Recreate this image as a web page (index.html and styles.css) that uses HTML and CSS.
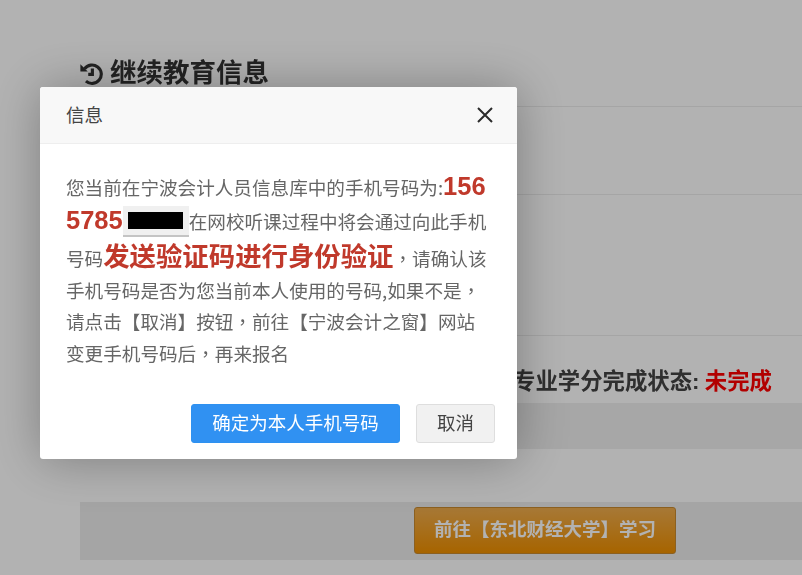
FILE: index.html
```html
<!DOCTYPE html>
<html lang="zh-CN">
<head>
<meta charset="utf-8">
<title>继续教育信息</title>
<link rel="stylesheet" href="styles.css">
</head>
<body>
<main class="page">
  <header class="heading">
    <h1 class="title">
      <svg class="title-icon" viewBox="0 0 26 26" aria-hidden="true">
        <path class="icon-stroke" d="M6 8.5A10 10 0 1 1 7.5 21.8"/>
        <path class="icon-fill" d="M1.5 3.5 9.5 11.5H1.5Z"/>
        <path class="icon-hand" d="M14.5 8V14.5H10"/>
      </svg>
      <span>继续教育信息</span>
    </h1>
  </header>
  <section class="row row-one"></section>
  <section class="row row-two"></section>
  <section class="status">专业学分完成状态: <em class="status-value">未完成</em></section>
  <div class="band band-one"></div>
  <div class="band band-two">
    <a class="study-btn">前往【东北财经大学】学习</a>
  </div>
</main>
<div class="overlay">
  <div class="dialog">
    <div class="dialog-head">
      <span class="dialog-title">信息</span>
      <svg class="close" viewBox="0 0 16 16" aria-hidden="true"><path d="M1 1 15 15M15 1 1 15"/></svg>
    </div>
    <div class="dialog-body">您当前在宁波会计人员信息库中的手机号码为:<strong class="big big-num">1565785</strong><span class="mask"><span class="mask-black"></span></span>在网校听课过程中将会通过向此手机号码<strong class="big">发送验证码进行身份验证</strong><span class="punct" lang="zh-TW">，</span>请确认该手机号码是否为您当前本人使用的号码,如果不是<span class="punct" lang="zh-TW">，</span>请点击【取消】按钮<span class="punct" lang="zh-TW">，</span>前往【宁波会计之窗】网站变更手机号码后<span class="punct" lang="zh-TW">，</span>再来报名</div>
    <div class="dialog-foot">
      <a class="btn btn-primary">确定为本人手机号码</a>
      <a class="btn btn-plain">取消</a>
    </div>
  </div>
</div>
</body>
</html>
```
FILE: styles.css
```css
* { box-sizing: border-box; }
html, body { margin: 0; height: 100%; overflow: hidden; }
body {
  background: #fff;
  color: #333;
  font-family: "Liberation Sans", "Noto Sans CJK SC", sans-serif;
  filter: blur(.35px);
}
.page { padding-left: 80px; }
.heading {
  height: 107px;
  padding-top: 53px;
  border-bottom: 1px solid #ececec;
}
.title {
  margin: 0 0 0 -1px;
  display: flex;
  align-items: center;
  gap: 7px;
  font-size: 26.5px;
  line-height: 40px;
  font-weight: 700;
  color: #333;
}
.title-icon { width: 24px; height: 26px; flex: none; }
.icon-stroke, .icon-hand { fill: none; stroke: #333; stroke-width: 3.4; }
.icon-fill { fill: #333; }
.row { border-bottom: 1px solid #ececec; }
.row-one { height: 88px; }
.row-two { height: 141px; }
.status {
  height: 67px;
  padding: 29px 0 0 433px;
  font-size: 22.4px;
  line-height: 34px;
  font-weight: 700;
  color: #444;
}
.status-value { font-style: normal; color: #f00; margin-left: -1px; }
.band { background: #f0f0f0; }
.band-one { height: 46px; margin-bottom: 53px; }
.band-two { height: 58px; padding: 5px 0 0 334px; background: #ececec; }
.study-btn {
  display: block;
  width: 262px;
  height: 47px;
  border: 1px solid #c88a30;
  border-radius: 3px;
  background: linear-gradient(#f0ad4e, #f09000);
  color: #fff;
  font-size: 18.5px;
  font-weight: 700;
  line-height: 44px;
  text-align: center;
}
.overlay {
  position: fixed;
  inset: 0;
  background: rgba(0, 0, 0, .3);
}
.dialog {
  position: absolute;
  left: 40px;
  top: 87px;
  width: 477px;
  height: 372px;
  background: #fff;
  border-radius: 3px;
  box-shadow: 1px 1px 50px rgba(0, 0, 0, .3);
  overflow: hidden;
}
.dialog-head {
  display: flex;
  align-items: center;
  justify-content: space-between;
  height: 57px;
  padding: 0 24px 0 26px;
  background: #f8f8f8;
  border-bottom: 1px solid #eee;
  font-size: 18.5px;
  color: #333;
}
.dialog-title { margin-bottom: 3px; color: #444; }
.close { width: 16px; height: 16px; }
.close path { fill: none; stroke: #2b2b2b; stroke-width: 2; }
.dialog-body {
  height: 260px;
  padding: 25px 26px 0;
  font-family: "Noto Sans CJK SC", sans-serif;
  font-size: 18.6px;
  line-height: 31.5px;
  color: #666;
  word-break: break-all;
}
.big {
  font-size: 26.4px;
  line-height: 36px;
  color: #c0392b;
}
.big-num { font-family: "Liberation Sans", sans-serif; font-size: 25.5px; line-height: 34px; }
.punct { font-family: "Noto Sans CJK TC", sans-serif; }
.mask {
  display: inline-block;
  width: 66px;
  height: 31px;
  padding: 6px 6px 0 5px;
  margin-bottom: -6px;
  vertical-align: -2px;
  background: #f0f0f0;
  border-bottom: 2px solid #c4c4c4;
}
.mask-black { display: block; height: 17px; background: #000; }
.dialog-foot {
  display: flex;
  justify-content: flex-end;
  gap: 16px;
  padding-right: 22px;
}
.btn {
  height: 39px;
  border-radius: 3px;
  font-size: 18.5px;
  line-height: 37px;
  text-align: center;
}
.btn-primary {
  width: 209px;
  border: 1px solid #2e91f0;
  background: #3091f2;
  color: #fff;
}
.btn-plain {
  width: 79px;
  border: 1px solid #dedede;
  background: #f1f1f1;
  color: #444;
}
```
